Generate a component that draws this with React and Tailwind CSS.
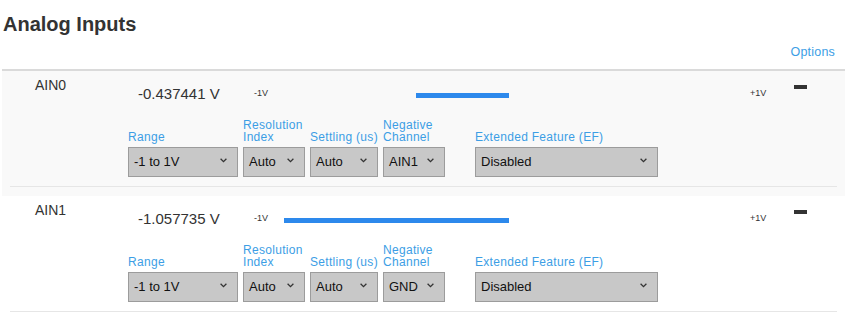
import React from "react";

const CHANNELS = [
  { name: "AIN0", value: -0.437441, range: "-1 to 1V", neg: "AIN1", bg: "bg-[#f9f9f9]" },
  { name: "AIN1", value: -1.057735, range: "-1 to 1V", neg: "GND", bg: "bg-white" },
];

const HALF = 213;

function Chevron() {
  return (
    <svg width="7" height="5" viewBox="0 0 7 5" className="shrink-0 -mt-[3px]">
      <polyline points="0.6,0.8 3.5,3.6 6.4,0.8" fill="none" stroke="#333" strokeWidth="1.3" />
    </svg>
  );
}

function Select({ value, width }) {
  return (
    <div
      className={`${width} h-[30px] flex items-center justify-between pl-[5px] pr-[10px] bg-[#c8c8c8] border border-[#9c9c9c] text-[13px] text-[#111]`}
    >
      <span>{value}</span>
      <Chevron />
    </div>
  );
}

function Field({ label, value, width, className = "" }) {
  return (
    <div className={`flex flex-col ${className}`}>
      <div className="text-[12px] leading-[12px] tracking-[0.3px] text-[#3c9ee5] mb-[4px]">
        {label}
      </div>
      <Select value={value} width={width} />
    </div>
  );
}

function ChannelRow({ ch }) {
  const left = HALF * (1 + Math.min(ch.value, 0));
  const width = HALF * Math.abs(ch.value);
  return (
    <div className={`${ch.bg} h-[125px] flex flex-col`}>
      <div className="flex">
        <div className="w-[126px] pl-[33px] pt-[6px] text-[14px] leading-[16px] text-[#333]">
          {ch.name}
        </div>
        <div className="flex flex-col">
          <div className="flex items-start h-[32px]">
            <div className="w-[126px] pl-[10px] mt-[14px] text-[15px] leading-[18px] text-[#333]">
              {ch.value.toFixed(6)} V
            </div>
            <div className="w-[42px] mt-[17px] text-[9px] leading-[10px] text-[#333]">-1V</div>
            <div className="relative w-[426px] h-[5px] mt-[22px]">
              <div
                className="absolute top-0 h-[5px] bg-[#2d89ec]"
                style={{ left: `${left}px`, width: `${width}px` }}
              />
            </div>
            <div className="ml-[28px] w-[44px] mt-[17px] text-[9px] leading-[10px] text-[#333]">+1V</div>
            <div className="mt-[14px] w-[13px] h-[4px] bg-[#333]" />
          </div>
          <div className="flex items-end mt-[16px]">
            <Field label="Range" value={ch.range} width="w-[110px]" />
            <Field label={<>Resolution<br />Index</>} value="Auto" width="w-[62px]" className="ml-[5px]" />
            <Field label="Settling (us)" value="Auto" width="w-[68px]" className="ml-[5px]" />
            <Field label={<>Negative<br />Channel</>} value={ch.neg} width="w-[62px]" className="ml-[5px]" />
            <Field label="Extended Feature (EF)" value="Disabled" width="w-[183px]" className="ml-[30px]" />
          </div>
        </div>
      </div>
      <div className="mt-[9px] ml-[8px] mr-[8px] h-px bg-[#e6e6e6]" />
    </div>
  );
}

export default function App() {
  return (
    <div className="w-[845px] h-[312px] overflow-hidden bg-white font-['Liberation_Sans',Arial,sans-serif] text-[#333]">
      <h2 className="mt-[12px] pl-[3px] text-[20px] leading-[24px] font-bold text-[#333]">
        Analog Inputs
      </h2>
      <div className="mt-[8px] pr-[10px] flex justify-end">
        <span className="text-[12.5px] leading-[16px] tracking-[0.2px] text-[#3c9ee5]">Options</span>
      </div>
      <div className="mt-[9px] ml-[2px] border-t-2 border-[#dadada]">
        {CHANNELS.map((ch) => (
          <ChannelRow key={ch.name} ch={ch} />
        ))}
      </div>
    </div>
  );
}
